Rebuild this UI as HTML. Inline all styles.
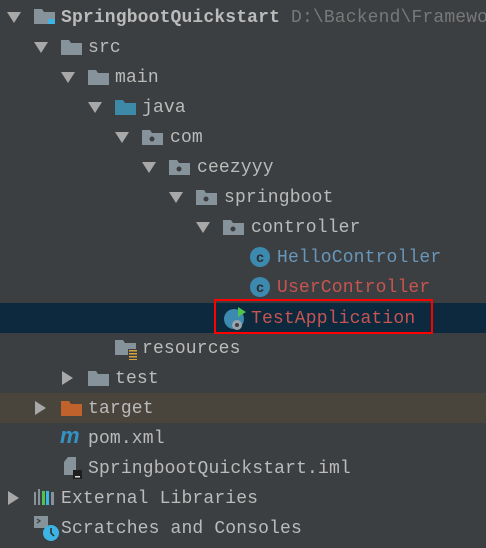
<!DOCTYPE html><html><head><style>
body{margin:0;width:486px;height:548px;background:#3c3f41;overflow:hidden;position:relative;font-family:"Liberation Mono",monospace;font-size:18px;color:#bbbbbb}
.r{position:absolute;left:0;width:486px;height:30px}
.t{position:absolute;top:5px;line-height:22px;white-space:nowrap;letter-spacing:0.15px}
.a{position:absolute;top:10px;width:0;height:0;border-left:7px solid transparent;border-right:7px solid transparent;border-top:11px solid #a8a8a8}
.ar{position:absolute;top:8px;width:0;height:0;border-top:7px solid transparent;border-bottom:7px solid transparent;border-left:11px solid #a8a8a8}
.f{position:absolute;top:8px;width:21px;height:15px}
</style></head><body>
<svg width="0" height="0" style="position:absolute"><defs>
<path id="fd" d="M0 0H8L10 3H21V15H0Z"/>
</defs></svg>

<div class="r" style="top:2px"><div class="a" style="left:7px"></div>
<svg class="f" style="left:34px;top:7px" width="24" height="20"><use href="#fd" fill="#87939a"/><rect x="14" y="10" width="9" height="9" fill="#3eb4e4"/></svg>
<div class="t" style="left:61px;font-weight:bold">SpringbootQuickstart <span style="font-weight:normal;color:#787878">D:\Backend\Framework</span></div></div>

<div class="r" style="top:32px"><div class="a" style="left:34px"></div><svg class="f" style="left:61px"><use href="#fd" fill="#87939a"/></svg><div class="t" style="left:88px">src</div></div>
<div class="r" style="top:62px"><div class="a" style="left:61px"></div><svg class="f" style="left:88px"><use href="#fd" fill="#87939a"/></svg><div class="t" style="left:115px">main</div></div>
<div class="r" style="top:92px"><div class="a" style="left:88px"></div><svg class="f" style="left:115px"><use href="#fd" fill="#3d8aa8"/></svg><div class="t" style="left:142px">java</div></div>
<div class="r" style="top:122px"><div class="a" style="left:115px"></div><svg class="f" style="left:142px"><use href="#fd" fill="#87939a"/><circle cx="10" cy="9" r="2.5" fill="#3c3f41"/></svg><div class="t" style="left:170px">com</div></div>
<div class="r" style="top:152px"><div class="a" style="left:142px"></div><svg class="f" style="left:169px"><use href="#fd" fill="#87939a"/><circle cx="10" cy="9" r="2.5" fill="#3c3f41"/></svg><div class="t" style="left:197px">ceezyyy</div></div>
<div class="r" style="top:182px"><div class="a" style="left:169px"></div><svg class="f" style="left:196px"><use href="#fd" fill="#87939a"/><circle cx="10" cy="9" r="2.5" fill="#3c3f41"/></svg><div class="t" style="left:224px">springboot</div></div>
<div class="r" style="top:212px"><div class="a" style="left:196px"></div><svg class="f" style="left:223px"><use href="#fd" fill="#87939a"/><circle cx="10" cy="9" r="2.5" fill="#3c3f41"/></svg><div class="t" style="left:251px">controller</div></div>

<div class="r" style="top:242px"><svg style="position:absolute;left:250px;top:5px" width="20" height="20"><circle cx="10" cy="10" r="10" fill="#3d8ab0"/><text x="10" y="15" font-family="Liberation Sans" font-size="14" font-weight="bold" fill="#2b2b2b" text-anchor="middle">c</text></svg><div class="t" style="left:277px;color:#6897bb">HelloController</div></div>
<div class="r" style="top:272px"><svg style="position:absolute;left:250px;top:5px" width="20" height="20"><circle cx="10" cy="10" r="10" fill="#3d8ab0"/><text x="10" y="15" font-family="Liberation Sans" font-size="14" font-weight="bold" fill="#2b2b2b" text-anchor="middle">c</text></svg><div class="t" style="left:277px;color:#c75450">UserController</div></div>

<div class="r" style="top:303px;height:30px;background:#0d293e"></div>
<div style="position:absolute;left:214px;top:299px;width:215px;height:31px;border:2px solid #ff0000"></div>
<div class="r" style="top:303px"><svg style="position:absolute;left:223px;top:2px" width="26" height="26"><circle cx="11" cy="14" r="10" fill="#3d8ab0"/><polygon points="15,2 23,7 15,12" fill="#4fc24f"/><circle cx="14" cy="20" r="5" fill="#9aa4ab"/><circle cx="14" cy="20" r="2" fill="#3c3f41"/></svg><div class="t" style="left:251px;color:#c75450">TestApplication</div></div>

<div class="r" style="top:333px"><svg style="position:absolute;left:115px;top:7px" width="24" height="20"><use href="#fd" fill="#87939a"/><rect x="13" y="9" width="10" height="11" fill="#3c3f41"/><g fill="#d6a33e"><rect x="14" y="10" width="8" height="1.5"/><rect x="14" y="13" width="8" height="1.5"/><rect x="14" y="16" width="8" height="1.5"/><rect x="14" y="19" width="8" height="1.5"/></g></svg><div class="t" style="left:142px">resources</div></div>
<div class="r" style="top:363px"><div class="ar" style="left:62px"></div><svg class="f" style="left:88px"><use href="#fd" fill="#87939a"/></svg><div class="t" style="left:115px">test</div></div>
<div class="r" style="top:393px;background:#49453d"><div class="ar" style="left:35px"></div><svg class="f" style="left:61px"><use href="#fd" fill="#c0622b"/></svg><div class="t" style="left:88px">target</div></div>
<div class="r" style="top:423px"><div class="t" style="left:60px;color:#3592c4;font-family:'Liberation Sans';font-style:italic;font-weight:bold;font-size:22px;top:2px">m</div><div class="t" style="left:88px">pom.xml</div></div>
<div class="r" style="top:453px"><svg style="position:absolute;left:63px;top:4px" width="22" height="24"><path d="M5 0H13V18H1V5Z" fill="#87939a"/><rect x="10" y="13" width="9" height="9" fill="#1e1e1e"/><rect x="12" y="19" width="5" height="1.5" fill="#ddd"/></svg><div class="t" style="left:88px">SpringbootQuickstart.iml</div></div>
<div class="r" style="top:483px"><div class="ar" style="left:8px"></div><svg style="position:absolute;left:34px;top:6px" width="22" height="18"><rect x="0" y="3" width="2" height="13" fill="#87939a"/><rect x="4" y="0" width="2" height="16" fill="#87939a"/><rect x="8" y="2" width="3" height="14" fill="#4fc24f"/><rect x="12" y="2" width="3" height="14" fill="#3eb4e4"/><rect x="17" y="3" width="3" height="13" fill="#87939a"/></svg><div class="t" style="left:61px">External Libraries</div></div>
<div class="r" style="top:513px"><svg style="position:absolute;left:34px;top:3px" width="26" height="26"><rect x="0" y="0" width="14" height="12" fill="#87939a"/><path d="M3 3l3 2-3 2" stroke="#3c3f41" fill="none" stroke-width="1.3"/><circle cx="17" cy="17" r="8" fill="#3eb4e4"/><path d="M17 12v5l3 3" stroke="#2b2b2b" stroke-width="1.5" fill="none"/></svg><div class="t" style="left:61px">Scratches and Consoles</div></div>
</body></html>
